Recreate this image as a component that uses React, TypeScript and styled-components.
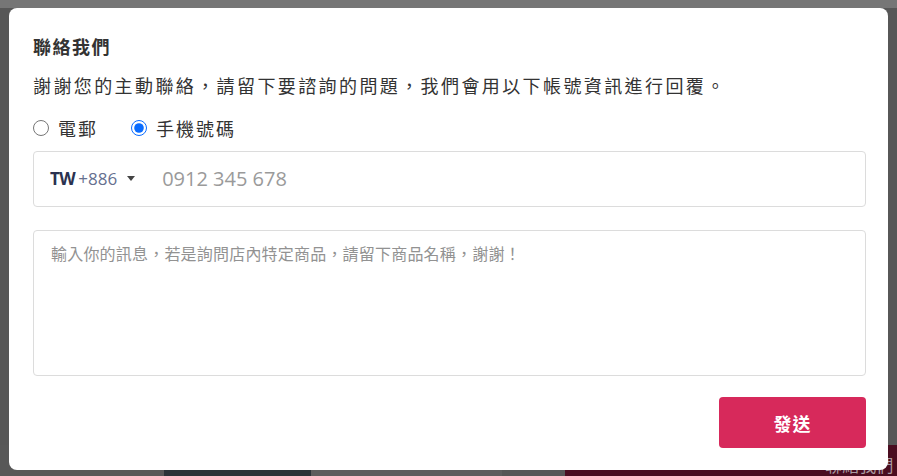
import React, { useState } from 'react';
import styled, { createGlobalStyle } from 'styled-components';

const GlobalStyle = createGlobalStyle`
  html, body {
    margin: 0;
    padding: 0;
    background: #565656;
    font-family: "Noto Sans CJK TC", "Noto Sans", sans-serif;
  }
  * { box-sizing: border-box; }
`;

const Page = styled.div`
  position: relative;
  width: 897px;
  height: 476px;
  overflow: hidden;
`;

/* dimmed store page lying under the modal */
const Behind = styled.div`
  height: 100%;
  display: flex;
  flex-direction: column;
  background: #575757;
`;

const BehindHeader = styled.div`
  height: 8px;
  background: #767676;
`;

const BehindBody = styled.div`
  flex: 1;
`;

const BehindFooter = styled.div`
  height: 31px;
  display: flex;
`;

const FooterPart = styled.div<{ $w: number; $bg: string }>`
  width: ${(p) => p.$w}px;
  background: ${(p) => p.$bg};
`;

const ContactBar = styled.div`
  flex: 1;
  background: #4a0d20;
  display: flex;
  justify-content: flex-end;
  align-items: flex-end;
  color: #a99aa0;
  font-size: 17px;
  line-height: 22px;
  white-space: nowrap;
  overflow: hidden;
`;

const Overlay = styled.div`
  position: absolute;
  inset: 0;
  padding: 8px 9px 6px 9px;
`;

const Modal = styled.div`
  width: 879px;
  height: 462px;
  background: #fff;
  border-radius: 8px;
  padding: 26px 22px 22px 24px;
  display: flex;
  flex-direction: column;
`;

const Title = styled.h1`
  margin: 0;
  font-size: 18px;
  font-weight: 700;
  line-height: 24px;
  letter-spacing: 1.5px;
  color: #333;
`;

const Intro = styled.p`
  margin: 14px 0 0;
  font-size: 18px;
  line-height: 26px;
  letter-spacing: 2.4px;
  color: #333;
`;

const RadioRow = styled.div`
  display: flex;
  align-items: center;
  gap: 33px;
  margin-top: 18px;
`;

const RadioLabel = styled.label`
  display: flex;
  align-items: center;
  gap: 9px;
  font-size: 18px;
  line-height: 24px;
  letter-spacing: 2px;
  color: #333;
  cursor: pointer;
`;

const RadioInput = styled.input`
  margin: 0;
  width: 16px;
  height: 16px;
  accent-color: #0a6cff;
`;

const PhoneBox = styled.div`
  margin-top: 11px;
  height: 56px;
  border: 1px solid #dcdcdc;
  border-radius: 4px;
  display: flex;
  align-items: center;
  padding-left: 16px;
`;

const Country = styled.div`
  display: flex;
  align-items: center;
  font-family: "Open Sans", "Noto Sans", sans-serif;
  font-size: 17px;
`;

const CountryCode = styled.span`
  font-weight: 700;
  color: #2b3250;
  letter-spacing: -0.5px;
`;

const DialCode = styled.span`
  margin-left: 3px;
  color: #66708f;
`;

const Caret = styled.span`
  margin-left: 10px;
  width: 0;
  height: 0;
  border-left: 4px solid transparent;
  border-right: 4px solid transparent;
  border-top: 5px solid #444;
`;

const PhoneInput = styled.input`
  flex: 1;
  margin-left: 27px;
  padding: 0;
  border: none;
  outline: none;
  font-family: "Open Sans", "Noto Sans", sans-serif;
  font-size: 20px;
  color: #333;
  background: transparent;
  &::placeholder { color: #9a9a9a; }
`;

const Message = styled.textarea`
  margin-top: 23px;
  height: 147px;
  resize: none;
  border: 1px solid #dcdcdc;
  border-radius: 4px;
  padding: 10px 17px;
  font-family: "Noto Sans CJK TC", "Noto Sans", sans-serif;
  font-size: 16px;
  line-height: 24px;
  letter-spacing: 0.2px;
  color: #333;
  outline: none;
  &::placeholder { color: #929292; }
`;

const Footer = styled.div`
  margin-top: 21px;
  display: flex;
  justify-content: flex-end;
`;

const SendButton = styled.button`
  width: 147px;
  height: 51px;
  border: none;
  border-radius: 4px;
  background: #d7295b;
  color: #fff;
  font-family: "Noto Sans CJK TC", "Noto Sans", sans-serif;
  font-size: 18px;
  font-weight: 700;
  letter-spacing: 1px;
  cursor: pointer;
`;

export default function App() {
  const [method, setMethod] = useState('phone');
  return (
    <>
      <GlobalStyle />
      <Page>
        <Behind>
          <BehindHeader />
          <BehindBody />
          <BehindFooter>
            <FooterPart $w={164} $bg="#585858" />
            <FooterPart $w={147} $bg="#2b3338" />
            <FooterPart $w={191} $bg="#5d5d5d" />
            <FooterPart $w={63} $bg="#565656" />
            <ContactBar>聯絡我們&nbsp;</ContactBar>
          </BehindFooter>
        </Behind>
        <Overlay>
          <Modal>
            <Title>聯絡我們</Title>
            <Intro>謝謝您的主動聯絡，請留下要諮詢的問題，我們會用以下帳號資訊進行回覆。</Intro>
            <RadioRow>
              <RadioLabel>
                <RadioInput type="radio" name="method" checked={method === 'email'} onChange={() => setMethod('email')} />
                電郵
              </RadioLabel>
              <RadioLabel>
                <RadioInput type="radio" name="method" checked={method === 'phone'} onChange={() => setMethod('phone')} />
                手機號碼
              </RadioLabel>
            </RadioRow>
            <PhoneBox>
              <Country>
                <CountryCode>TW</CountryCode>
                <DialCode>+886</DialCode>
                <Caret />
              </Country>
              <PhoneInput placeholder="0912 345 678" />
            </PhoneBox>
            <Message placeholder="輸入你的訊息，若是詢問店內特定商品，請留下商品名稱，謝謝！" />
            <Footer>
              <SendButton>發送</SendButton>
            </Footer>
          </Modal>
        </Overlay>
      </Page>
    </>
  );
}
